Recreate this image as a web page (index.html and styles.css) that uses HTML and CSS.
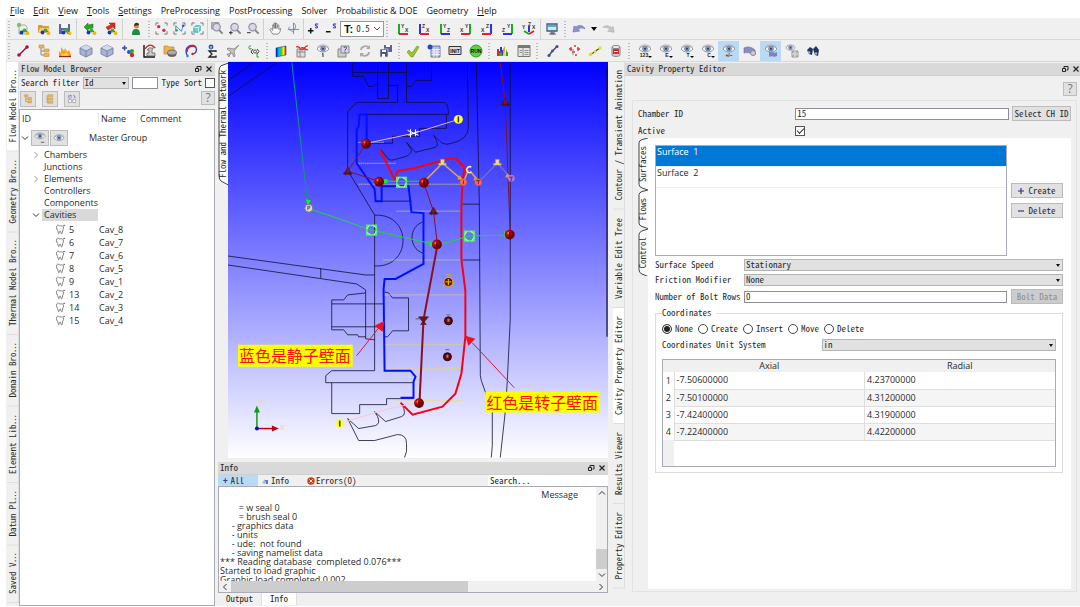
FILE: index.html
```html
<!DOCTYPE html>
<html lang="en">
<head>
<meta charset="utf-8">
<title>Flow Model Workbench</title>
<link rel="stylesheet" href="styles.css">
</head>
<body>
<svg class="defs" aria-hidden="true">
  <defs>
    <radialGradient id="ball-red" cx="35%" cy="35%"><stop offset="0" stop-color="#ff9a80"/><stop offset=".3" stop-color="#c81400"/><stop offset="1" stop-color="#6e0000"/></radialGradient>
    <linearGradient id="rainbow"><stop offset="0" stop-color="#0010e0"/><stop offset=".3" stop-color="#00c8f0"/><stop offset=".5" stop-color="#20d020"/><stop offset=".75" stop-color="#f8f000"/><stop offset="1" stop-color="#f00"/></linearGradient>
  </defs>
  <symbol id="balls" viewBox="0 0 14 14"><path d="M5 10l4-2 3 3" stroke="#333" fill="none"/><circle cx="5.500" cy="10.500" r="1.900" fill="#1738b8"/><circle cx="8.500" cy="8.500" r="1.900" fill="#29b42c"/><circle cx="11.500" cy="11.200" r="1.900" fill="#e8b81c"/></symbol>
  <symbol id="i-new" viewBox="0 0 14 14"><path d="M3 3h6l2 2v7H3z" fill="#eef2f4" stroke="#9aa"/><circle cx="3" cy="3" r="2.200" fill="#83bf72"/><use href="#balls"/></symbol>
  <symbol id="i-open" viewBox="0 0 14 14"><path d="M1 3h4l1 1h6v7H1z" fill="#d89b38"/><path d="M3 6h10l-2 5H1z" fill="#f5cb73"/><use href="#balls"/></symbol>
  <symbol id="i-save" viewBox="0 0 14 14"><path d="M1 2h11v10H1z" fill="#5b6a9e"/><path d="M3 2h7v4H3z" fill="#f4f6fa"/><path d="M4 8h5v4H4z" fill="#dde"/><use href="#balls"/></symbol>
  <symbol id="i-in" viewBox="0 0 14 14"><path d="M1 5l4-4v2l5-1v4l-5 1v2z" fill="#26a824" stroke="#157010" stroke-width=".5"/><use href="#balls"/></symbol>
  <symbol id="i-out" viewBox="0 0 14 14"><path d="M11 1v6L9 5 4 8 2 5l5-2-2-2z" fill="#e22a1e" stroke="#8c1410" stroke-width=".5"/><use href="#balls"/></symbol>
  <symbol id="i-user" viewBox="0 0 14 14"><path d="M3 13c0-4 1-6 4-6s4 2 4 6z" fill="#218a43"/><circle cx="7.500" cy="4" r="2.500" fill="#c98e5a"/><path d="M5 4c0-4 5-4 5-1z" fill="#4a2c14"/></symbol>
  <symbol id="brackets" viewBox="0 0 14 14"><path d="M1 4V1h3M10 1h3v3M13 10v3h-3M4 13H1v-3" stroke="#555" fill="none" stroke-width=".8"/></symbol>
  <symbol id="i-sel1" viewBox="0 0 14 14"><use href="#brackets"/><circle cx="4" cy="5" r="1.800" fill="#d8206c"/><circle cx="9.500" cy="9" r="1.800" fill="#d8206c"/></symbol>
  <symbol id="i-sel2" viewBox="0 0 14 14"><use href="#brackets"/><path d="M3 10V4l3 3 3 3 2-6" stroke="#2c8ac8" fill="none"/><circle cx="4" cy="9" r="1.300" fill="#2d9c2d"/><circle cx="11" cy="4" r="1.400" fill="#2850d8"/></symbol>
  <symbol id="i-sel3" viewBox="0 0 14 14"><use href="#brackets"/><path d="M3 6l2-2h5v5l-2 2H3z" fill="#70d0c8" stroke="#289088" stroke-width=".7"/><path d="M3 6h5v5M8 6l2-2" stroke="#fff" stroke-width=".7" fill="none"/></symbol>
  <symbol id="lens" viewBox="0 0 14 14"><path d="M8.500 8.500l4 4" stroke="#888" stroke-width="2.200"/><circle cx="6" cy="5.500" r="4" fill="#d6d9ee" stroke="#9494a4" stroke-width="1.300"/></symbol>
  <symbol id="i-zbox" viewBox="0 0 14 14"><path d="M.5.500h8v7h-8z" fill="#bbb" stroke="#999"/><use href="#lens"/></symbol>
  <symbol id="i-zin" viewBox="0 0 14 14"><use href="#lens"/><path d="M0 11.500h4M2 9.500v4" stroke="#222"/></symbol>
  <symbol id="i-zout" viewBox="0 0 14 14"><use href="#lens"/><path d="M0 11.500h4" stroke="#222"/></symbol>
  <symbol id="i-hand" viewBox="0 0 14 14"><path d="M4 13L1 8l1-1 2 2V3h1.500v4V1H7v6V1.500h1.500V7l1-4 1.200.5L10.500 8l2-1-.5 3-2 3z" fill="#fff" stroke="#666" stroke-width=".8"/></symbol>
  <symbol id="i-rot" viewBox="0 0 14 14"><path d="M7 1v12M1 8h12" stroke="#7384ae" fill="none"/><path d="M7 1c3 1 3 7-1 9M3 5c-2 2-1 4 3 5" stroke="#7384ae" fill="none"/></symbol>
  <symbol id="i-plus-s" viewBox="0 0 14 14"><path d="M1 9.500h6M4 6.500v6" stroke="#111" stroke-width="1.600"/><path d="M12 2.500c-3-1.500-4 1-2 1.700s2 3-1.500 1.800" stroke="#3a48b0" fill="none" stroke-width="1.200"/></symbol>
  <symbol id="i-minus-s" viewBox="0 0 14 14"><path d="M1 10.500h5" stroke="#111" stroke-width="1.600"/><path d="M12 2.500c-3-1.500-4 1-2 1.700s2 3-1.500 1.800" stroke="#3a48b0" fill="none" stroke-width="1.200"/></symbol>
  <symbol id="i-screen" viewBox="0 0 14 14"><path d="M2 2h10v7H2z" fill="#cfe8f8" stroke="#3c6078" stroke-width="1.300"/><path d="M3 3h8v2H3z" fill="#5aa6d8"/><path d="M6 9h3v3H6zM4 12h7" stroke="#667" fill="#889"/></symbol>
  <symbol id="i-undo" viewBox="0 0 14 14"><path d="M1 10l1-6 2 1c4-3 8-1 9 2-3-2-6-1-7 1l2 1z" fill="#8d93cf" stroke="#6a6fb0" stroke-width=".6"/></symbol>
  <symbol id="i-redo" viewBox="0 0 14 14"><path d="M13 11l-1-6-2 1C6 3 3 4 1 6c3-1 6 0 7 2l-2 2z" fill="#c8c8c8" stroke="#a5a5a5" stroke-width=".6"/></symbol>
  <symbol id="i-line" viewBox="0 0 14 14"><path d="M3 11l8-8" stroke="#8c1040" stroke-width="1.500"/><circle cx="3" cy="11" r="1.800" fill="#9c1846"/><circle cx="11" cy="3" r="1.800" fill="#9c1846"/></symbol>
  <symbol id="i-tree" viewBox="0 0 14 14"><path d="M4 3v8h4M4 7h4" stroke="#888" fill="none"/><path d="M2 1h5v3H2zM7 5h5v3H7zM7 9.500h5v3H7z" fill="#f0b452" stroke="#c49038" stroke-width=".6"/></symbol>
  <symbol id="i-fire" viewBox="0 0 14 14"><path d="M1 12V7l2 2V3l3 4 1-3 2 4 2-2 2 5v1z" fill="#f9a01b"/><path d="M3 12l1-3 2 2 2-3 2 3 1 1z" fill="#ffe040"/><path d="M1 12.500h12" stroke="#a02010" stroke-width="1.300"/></symbol>
  <symbol id="i-cube" viewBox="0 0 14 14"><path d="M7 1l6 3v6l-6 3-6-3V4z" fill="#a9b3d2" stroke="#6c7698" stroke-width=".8"/><path d="M1 4l6 3 6-3L7 1z" fill="#d2d9ec"/><path d="M1 4l6 3 6-3M7 7v6" stroke="#6c7698" fill="none" stroke-width=".8"/></symbol>
  <symbol id="i-addball" viewBox="0 0 14 14"><path d="M1 4h5M3.500 1.500v5" stroke="#3b47a5" stroke-width="1.400"/><circle cx="8" cy="8" r="2" fill="#2850d8"/><circle cx="11" cy="7" r="2" fill="#2a2"/><circle cx="11" cy="11" r="2.200" fill="#d3281e"/></symbol>
  <symbol id="i-curve" viewBox="0 0 14 14"><path d="M2 1v12h11" stroke="#111" fill="none" stroke-width="1.400"/><path d="M5 12V9h2V6H5l2-2h4l-1 2v3h3v3z" fill="#ccc" stroke="#555" stroke-width=".7"/><path d="M3 5c3-5 7-5 10-1" stroke="#e01818" fill="none" stroke-width="1.300"/></symbol>
  <symbol id="i-disk" viewBox="0 0 14 14"><path d="M1 2h4l1 1h5v7H1z" fill="#eeb450" stroke="#a87a2a" stroke-width=".6"/><ellipse cx="9" cy="10" rx="4.500" ry="3" fill="#666"/><ellipse cx="9" cy="8.500" rx="4.500" ry="2.500" fill="#aaa" stroke="#555" stroke-width=".7"/></symbol>
  <symbol id="i-loop" viewBox="0 0 14 14"><path d="M3 11C0 4 5 1 9 1.500s5 7 0 8.500" stroke="#3340d8" fill="none" stroke-width="1.400"/><path d="M3 8c0-5 5-7 8-5" stroke="#e01818" fill="none" stroke-width="1.300"/><circle cx="3.500" cy="12" r="1.300" fill="#28f"/><circle cx="8.500" cy="10" r="1.200" fill="#d22"/></symbol>
  <symbol id="i-sigma" viewBox="0 0 14 14"><path d="M11 8V7H4l3 3-3 3h7v-1.500" stroke="#222" fill="none" stroke-width="1.300"/><circle cx="6" cy="3" r="2.400" fill="#2a4cc0"/><path d="M6 2v2.500" stroke="#fff"/></symbol>
  <symbol id="i-plane" viewBox="0 0 14 14"><path d="M13 1L8 5 2 4 1 5l4 3-2 2-2 0 2 3 1-3 2-1 2 4 1-1-1-5z" fill="#c4c4c4" stroke="#777" stroke-width=".7"/></symbol>
  <symbol id="i-gl" viewBox="0 0 14 14"><path d="M4 2c-3-1-3 4 0 3V4M10 9v4h2" stroke="#2b9b3d" fill="none"/><path d="M6 5L4 8l2 2M10 5l2 2.500L10 10" stroke="#333" fill="none"/><circle cx="8" cy="7.500" r="1.500" fill="none" stroke="#555"/></symbol>
  <symbol id="i-contour" viewBox="0 0 14 14"><path d="M2 4l10-2v9l-10 2z" fill="url(#rainbow)" stroke="#226" stroke-width=".5"/></symbol>
  <symbol id="i-plot" viewBox="0 0 14 14"><path d="M2 5h8v8H2z" fill="#ddd" stroke="#888"/><path d="M2 8h8M5 5v8" stroke="#888"/><path d="M1 3c4-2 4 3 6 3s3-5 6-4M6 4c2-2 4 2 7 2" stroke="#d81e1e" fill="none" stroke-width="1.200"/></symbol>
  <symbol id="eye" viewBox="0 0 14 14"><path d="M1 5c3-4 9-4 12 0-3 4-9 4-12 0z" fill="#f4f4f4" stroke="#888" stroke-width=".8"/><path d="M1 3.500c3-3.500 9-3.500 12 0" stroke="#aaa" fill="none" stroke-width=".8"/><circle cx="7" cy="4.800" r="2.500" fill="#7f9fd2" stroke="#4d678f" stroke-width=".5"/><circle cx="7" cy="4.800" r="1" fill="#334"/></symbol>
  <symbol id="i-eye1" viewBox="0 0 14 14"><use href="#eye"/><path d="M7 13V9.500l-1 .7" stroke="#333" fill="none"/></symbol>
  <symbol id="i-qwin" viewBox="0 0 14 14"><path d="M1 5h8v8H1z" fill="#ccc" stroke="#888"/><path d="M4 2h8v7H4z" fill="#d7d7e0" stroke="#888"/><path d="M7 4c0-1.500 3-1.500 2.500.3L8 6v.6M8 7.500v1" stroke="#3340a0" fill="none"/></symbol>
  <symbol id="i-refresh" viewBox="0 0 14 14"><path d="M3 6c0-4 6-5 8-2M11 8c0 4-6 5-8 2" stroke="#aaa" stroke-width="1.800" fill="none"/><path d="M12 1v4H8zM2 13V9h4z" fill="#aaa"/></symbol>
  <symbol id="i-saves" viewBox="0 0 14 14"><path d="M5 1h8v7H5z" fill="#5b6490"/><path d="M7 1h4v2H7z" fill="#fff"/><path d="M1 5h8v8H1z" fill="#4a5488" stroke="#eee" stroke-width=".6"/><path d="M3 6h4v2H3zM3 10h3v3H3z" fill="#fff"/></symbol>
  <symbol id="i-check" viewBox="0 0 14 14"><path d="M1 8l2-2 3 3 5-7 2 1-6 10H5z" fill="#9bc42c" stroke="#6d9018" stroke-width=".6"/></symbol>
  <symbol id="i-calc" viewBox="0 0 14 14"><path d="M4 2h9v11H4z" fill="#b5bde0" stroke="#5561a0" stroke-width=".8"/><path d="M4.500 5.500h8.500M4.500 8h8.500M4.500 10.500h8.500M7 5v8M10 5v8" stroke="#fff" stroke-width=".8"/><circle cx="3" cy="3" r="2.500" fill="#2848b8"/></symbol>
  <symbol id="i-list" viewBox="0 0 14 14"><path d="M1 1.500h12v11H1z" fill="#e6e6e6" stroke="#777"/><path d="M1 3h12" stroke="#777" stroke-width="2"/><path d="M6 4v8M7.500 6.500h4M7.500 8.500h4M7.500 10.500h4M2.500 6.500h2.500M2.500 8.500h2.500" stroke="#888" stroke-width=".9"/></symbol>
  <symbol id="i-bars" viewBox="0 0 14 14"><path d="M1 12V5h2v2h1v5z" fill="#e22"/><path d="M4 12V3h2v3h1v6z" fill="#2a3ad8"/><path d="M3 12l2-5 2 5z" fill="#2cb52c"/><path d="M7 12V5l2-3v10z" fill="#f0a020"/><path d="M7 12l1.500-5 2 5z" fill="#f0e020"/><path d="M10 12V5l1 3h1v4z" fill="#28a828"/></symbol>
  <symbol id="i-nodes" viewBox="0 0 14 14"><path d="M3 11.500l3-4 5-5" stroke="#3a467c" stroke-width="1.400" fill="none"/><circle cx="3" cy="11.500" r="1.600" fill="#46538c"/><circle cx="11" cy="2.500" r="1.600" fill="#46538c"/><circle cx="6.500" cy="7" r="1.400" fill="#46538c"/></symbol>
  <symbol id="i-dots" viewBox="0 0 14 14"><path d="M2 5h3M7 2h2M10 5h3M5 8h3M8 11h2M4 3v4M11 3v4" stroke="#d23a2e" stroke-width="1.300"/><path d="M6 5v6" stroke="#888"/></symbol>
  <symbol id="i-ynodes" viewBox="0 0 14 14"><path d="M2 10l3-1 4-3 3-2" stroke="#444" stroke-width="1.200" fill="none"/><circle cx="2.500" cy="10.500" r="1.800" fill="#e6dc28"/><circle cx="7" cy="7.500" r="1.500" fill="#e6dc28"/><circle cx="12" cy="4" r="1.700" fill="#e6dc28"/></symbol>
  <symbol id="i-barrel" viewBox="0 0 14 14"><path d="M3 3v8c0 2 8 2 8 0V3" fill="#c8c8d0" stroke="#888"/><path d="M4 5h6v5H4z" fill="#e02828"/><path d="M5 7h4v1H5z" fill="#fff"/><ellipse cx="7" cy="3" rx="4" ry="1.600" fill="#eee" stroke="#888"/></symbol>
  <symbol id="i-surf" viewBox="0 0 14 14"><path d="M1 4c3-2 8-1 11 2v5C9 9 5 8 1 9z" fill="#8a8cc8" stroke="#6668a4" stroke-width=".6"/><circle cx="10" cy="9" r="2.500" fill="#ccd" stroke="#889"/></symbol>
  <symbol id="i-eyesurf" viewBox="0 0 14 14"><use href="#eye"/><path d="M5 8c3-1 5 2 8 0v4c-3 2-5-1-8 1z" fill="#8280c4"/></symbol>
  <symbol id="i-eyegrid" viewBox="0 0 14 14"><use href="#eye" width="11" height="11"/><path d="M7 7h6v6H7z" fill="#bbb" stroke="#999"/><path d="M7 10h6M10 7v6" stroke="#ddd"/></symbol>
  <symbol id="i-binoc" viewBox="0 0 14 14"><path d="M1 6l3-3 3 2-1 6-3-1zM7 5l3-3 3 4-1 6-3-1z" fill="#26355e"/><circle cx="3" cy="8.500" r="1.300" fill="#8fb3e8"/><circle cx="10" cy="9.500" r="1.300" fill="#8fb3e8"/></symbol>
  <symbol id="i-tooth" viewBox="0 0 12 12"><path d="M2 2c1-1.500 2-.5 3 0s3-1 4 1-1 4-1 6-1 2.500-1.500.5S5.500 7 5 8.500 4 12 3.500 9 .5 5 2 2z" fill="#fff" stroke="#666" stroke-width=".9"/><path d="M9 1.500h2" stroke="#555"/></symbol>
  <symbol id="i-restore" viewBox="0 0 8 8"><path d="M3 3V1.500h4V5H5.500" fill="none" stroke="#222"/><path d="M1.500 3.500h3v3h-3z" fill="none" stroke="#222"/></symbol>
  <symbol id="i-close" viewBox="0 0 8 8"><path d="M1.500 1.500l5 5M6.500 1.500l-5 5" stroke="#222" stroke-width="1.200"/></symbol>
  <symbol id="ball" viewBox="-5 -5 10 10"><circle r="4.500" fill="url(#ball-red)"/><path d="M0-2V2" stroke="#300" stroke-width="1"/></symbol>
  <symbol id="gate" viewBox="-5 -5 10 10"><path d="M-4-4h8v8h-8z" fill="none" stroke="#4cf05a" stroke-width="1.500"/><path d="M-2-4L-4-1M4 1L2 4M1-4L4-2M-4 2L-1 4" stroke="#a0ffa8"/></symbol>
  <symbol id="tri" viewBox="-5 -5 10 10"><path d="M0-4L4 3H-4z" fill="#7a1a1e" stroke="#4c1018" stroke-width=".6"/><path d="M-2 4V0M2 4V0M-5 2H5" stroke="#301018" stroke-width=".5"/></symbol>
</svg>

<div class="app">
  <nav class="menubar">
    <button class="menu"><u>F</u>ile</button><button class="menu"><u>E</u>dit</button><button class="menu"><u>V</u>iew</button><button class="menu"><u>T</u>ools</button><button class="menu"><u>S</u>ettings</button><button class="menu">PreProcessing</button><button class="menu">PostProcessing</button><button class="menu">Solver</button><button class="menu">Probabilistic &amp; DOE</button><button class="menu">Geometry</button><button class="menu"><u>H</u>elp</button>
  </nav>

  <div class="toolbars">
    <div class="toolbar">
      <i class="grip"></i>
      <button class="tool" aria-label="New"><svg><use href="#i-new"/></svg></button>
      <button class="tool" aria-label="Open"><svg><use href="#i-open"/></svg></button>
      <button class="tool" aria-label="Save"><svg><use href="#i-save"/></svg></button>
      <i class="rule"></i>
      <button class="tool" aria-label="Import"><svg><use href="#i-in"/></svg></button>
      <button class="tool" aria-label="Export"><svg><use href="#i-out"/></svg></button>
      <i class="rule"></i>
      <button class="tool" aria-label="User"><svg><use href="#i-user"/></svg></button>
      <i class="grip"></i>
      <button class="tool tight" aria-label="Select nodes"><svg><use href="#i-sel1"/></svg></button>
      <button class="tool tight" aria-label="Select network"><svg><use href="#i-sel2"/></svg></button>
      <button class="tool tight" aria-label="Select solid"><svg><use href="#i-sel3"/></svg></button>
      <i class="rule slim"></i>
      <button class="tool tight" aria-label="Zoom window"><svg><use href="#i-zbox"/></svg></button>
      <button class="tool tight" aria-label="Zoom in"><svg><use href="#i-zin"/></svg></button>
      <button class="tool tight" aria-label="Zoom out"><svg><use href="#i-zout"/></svg></button>
      <i class="rule"></i>
      <button class="tool tight" aria-label="Pan"><svg><use href="#i-hand"/></svg></button>
      <button class="tool tight" aria-label="Rotate"><svg><use href="#i-rot"/></svg></button>
      <i class="rule slim"></i>
      <button class="tool tight" aria-label="Larger symbols"><svg><use href="#i-plus-s"/></svg></button>
      <button class="tool tight" aria-label="Smaller symbols"><svg><use href="#i-minus-s"/></svg></button>
      <label class="scale"><b>T:</b><select class="bare" aria-label="Text scale"><option>0.5</option></select><svg class="chev" viewBox="0 0 6 6"><path d="M0 1l3 3 3-3" fill="none" stroke="#555"/></svg></label>
      <i class="grip wide"></i>
      <button class="tool" aria-label="View XY"><svg viewBox="0 0 14 14" class="axes"><path d="M3 2v10" stroke="#15b01a"/><path d="M3 12h9" stroke="#e02030"/><text x="5" y="6">Y</text><text x="9" y="10">X</text></svg></button>
      <button class="tool" aria-label="View XZ"><svg viewBox="0 0 14 14" class="axes"><path d="M3 2v10" stroke="#3030e0"/><path d="M3 12h9" stroke="#e02030"/><text x="5" y="6">Z</text><text x="9" y="10">X</text></svg></button>
      <button class="tool" aria-label="View ZY"><svg viewBox="0 0 14 14" class="axes"><path d="M3 2v10" stroke="#15b01a"/><path d="M3 12h9" stroke="#3030e0"/><text x="5" y="6">Y</text><text x="9" y="10">Z</text></svg></button>
      <button class="tool" aria-label="View -XY"><svg viewBox="0 0 14 14" class="axes"><path d="M11 2v10" stroke="#15b01a"/><path d="M2 12h9" stroke="#e02030"/><text x="6" y="6">Y</text><text x="1" y="10">X</text></svg></button>
      <button class="tool" aria-label="View -XZ"><svg viewBox="0 0 14 14" class="axes"><path d="M11 2v10" stroke="#3030e0"/><path d="M2 12h9" stroke="#e02030"/><text x="6" y="6">Z</text><text x="1" y="10">X</text></svg></button>
      <button class="tool" aria-label="View -ZY"><svg viewBox="0 0 14 14" class="axes"><path d="M11 2v10" stroke="#15b01a"/><path d="M2 12h9" stroke="#3030e0"/><text x="6" y="6">Y</text><text x="1" y="10">Z</text></svg></button>
      <button class="tool" aria-label="Isometric view"><svg viewBox="0 0 14 14" class="axes"><path d="M7 4v6" stroke="#3030e0"/><path d="M7 12l-5-3" stroke="#15b01a"/><path d="M7 12l5-3" stroke="#e02030"/><text x="6" y="4">Z</text><text x="0" y="7">Y</text><text x="10" y="7">X</text></svg></button>
      <i class="rule slim"></i>
      <button class="tool" aria-label="Display"><svg><use href="#i-screen"/></svg></button>
      <i class="grip"></i>
      <button class="tool" aria-label="Undo"><svg><use href="#i-undo"/></svg></button>
      <button class="tool thin" aria-label="Undo history"><svg class="drop" viewBox="0 0 6 4"><path d="M0 0h6L3 4z"/></svg></button>
      <button class="tool tight" aria-label="Redo"><svg><use href="#i-redo"/></svg></button>
    </div>
    <div class="toolbar">
      <i class="grip"></i>
      <button class="tool" aria-label="Line"><svg><use href="#i-line"/></svg></button>
      <button class="tool" aria-label="Tree"><svg><use href="#i-tree"/></svg></button>
      <button class="tool" aria-label="Thermal"><svg><use href="#i-fire"/></svg></button>
      <button class="tool" aria-label="Solid"><svg><use href="#i-cube"/></svg></button>
      <button class="tool" aria-label="Solid copy"><svg><use href="#i-cube"/></svg></button>
      <button class="tool" aria-label="Add chamber"><svg><use href="#i-addball"/></svg></button>
      <button class="tool" aria-label="Performance curve"><svg><use href="#i-curve"/></svg></button>
      <button class="tool" aria-label="Library"><svg><use href="#i-disk"/></svg></button>
      <button class="tool" aria-label="Loop"><svg><use href="#i-loop"/></svg></button>
      <button class="tool" aria-label="Sum"><svg><use href="#i-sigma"/></svg></button>
      <button class="tool" aria-label="Mission"><svg><use href="#i-plane"/></svg></button>
      <button class="tool" aria-label="Global to local"><svg><use href="#i-gl"/></svg></button>
      <i class="grip"></i>
      <button class="tool" aria-label="Contour"><svg><use href="#i-contour"/></svg></button>
      <button class="tool" aria-label="Plot"><svg><use href="#i-plot"/></svg></button>
      <button class="tool" aria-label="View 1"><svg><use href="#i-eye1"/></svg></button>
      <button class="tool" aria-label="Query"><svg><use href="#i-qwin"/></svg></button>
      <button class="tool" aria-label="Refresh"><svg><use href="#i-refresh"/></svg></button>
      <button class="tool" aria-label="Save all"><svg><use href="#i-saves"/></svg></button>
      <i class="grip"></i>
      <button class="tool" aria-label="Check model"><svg><use href="#i-check"/></svg></button>
      <button class="tool" aria-label="Calculate"><svg><use href="#i-calc"/></svg></button>
      <button class="tool" aria-label="Initialise"><svg viewBox="0 0 14 14" class="badge"><path d="M1 2.500h12v8H1z" fill="#ddd" stroke="#333"/><text x="7" y="9">INIT</text></svg></button>
      <button class="tool" aria-label="Run"><svg viewBox="0 0 14 14" class="badge"><circle cx="7" cy="7" r="6" fill="#5fd048" stroke="#3a9c28"/><text x="7" y="9">RUN</text></svg></button>
      <i class="grip"></i>
      <button class="tool" aria-label="Distribution"><svg><use href="#i-bars"/></svg></button>
      <button class="tool" aria-label="Report"><svg><use href="#i-list"/></svg></button>
      <i class="grip wide"></i>
      <button class="tool" aria-label="Polyline"><svg><use href="#i-nodes"/></svg></button>
      <button class="tool" aria-label="Points"><svg><use href="#i-dots"/></svg></button>
      <button class="tool" aria-label="Spline"><svg><use href="#i-ynodes"/></svg></button>
      <button class="tool" aria-label="Cylinder"><svg><use href="#i-barrel"/></svg></button>
      <i class="grip wide"></i>
      <button class="tool" aria-label="Show numbers"><svg viewBox="0 0 14 14" class="mark"><use href="#eye"/><text x="6" y="13">123</text><path d="M10 12h4l-2 2z"/></svg></button>
      <button class="tool" aria-label="Show elements"><svg viewBox="0 0 14 14" class="mark"><use href="#eye"/><text x="8" y="13">E</text><path d="M10 12h4l-2 2z"/></svg></button>
      <button class="tool" aria-label="Show thermal"><svg viewBox="0 0 14 14" class="mark"><use href="#eye"/><text x="8" y="13">T</text><path d="M10 12h4l-2 2z"/></svg></button>
      <button class="tool" aria-label="Show chambers"><svg viewBox="0 0 14 14" class="mark"><use href="#eye"/><text x="8" y="13">C</text><path d="M10 12h4l-2 2z"/></svg></button>
      <button class="tool on" aria-label="Show sign"><svg viewBox="0 0 14 14" class="mark"><use href="#eye"/><text x="7" y="13">+/−</text></svg></button>
      <button class="tool" aria-label="Surface"><svg><use href="#i-surf"/></svg></button>
      <button class="tool on" aria-label="Show surface"><svg><use href="#i-eyesurf"/></svg></button>
      <button class="tool" aria-label="Show grid"><svg><use href="#i-eyegrid"/></svg></button>
      <button class="tool" aria-label="Find"><svg><use href="#i-binoc"/></svg></button>
    </div>
  </div>

  <main class="work">
    <div class="vtabs">
      <button class="vtab active">Flow Model Bro⋯</button>
      <button class="vtab">Geometry Bro⋯</button>
      <button class="vtab">Thermal Model Bro⋯</button>
      <button class="vtab">Domain Bro⋯</button>
      <button class="vtab">Element Lib⋯</button>
      <button class="vtab">Datum Pl⋯</button>
      <button class="vtab">Saved V⋯</button>
    </div>

    <section class="browser">
      <header class="title"><span>Flow Model Browser</span><svg><use href="#i-restore"/></svg><svg><use href="#i-close"/></svg></header>
      <div class="filter">
        <label for="filter-by">Search filter</label>
        <span class="combo filter-combo"><select id="filter-by"><option>Id</option></select></span>
        <input class="field filter-text" type="text" aria-label="Filter text">
        <label class="sort" for="type-sort">Type Sort</label><input class="tick" id="type-sort" type="checkbox">
      </div>
      <div class="browser-tools">
        <button class="btn square" aria-label="Expand tree"><svg><use href="#i-tree"/></svg></button>
        <button class="btn square" aria-label="Collapse tree"><svg viewBox="0 0 14 14"><path d="M3 2v10h5M3 7h5" stroke="#888" fill="none"/><path d="M4 1h7v3H4zM4 5.500h7v3H4zM4 10h7v3H4z" fill="#f0b452" stroke="#c49038" stroke-width=".6"/></svg></button>
        <button class="btn square" aria-label="Sort tree"><svg viewBox="0 0 14 14"><path d="M2 2h4v4H2zM8 8h4v4H8zM2 8h4v4H2z" fill="#fff" stroke="#999"/><path d="M2.500 3.500l1 1 2-3M9 2c2 0 2 2 2 4" stroke="#3850c0" fill="none"/></svg></button>
        <button class="btn square help">?</button>
      </div>
      <div class="tree">
        <div class="tree-head"><span>ID</span><span>Name</span><span>Comment</span></div>
        <div class="master">
          <svg class="twist" viewBox="0 0 8 8"><path d="M1 2.500l3 3 3-3"/></svg>
          <button class="btn eyebtn" aria-label="Show group menu"><svg viewBox="0 0 14 14"><use href="#eye"/><path d="M8 12h4"  stroke="#555"/></svg></button>
          <button class="btn eyebtn" aria-label="Show group"><svg viewBox="0 0 14 14"><use href="#eye" y="2"/></svg></button>
          <span class="master-name">Master Group</span>
        </div>
        <ul class="groups">
          <li><svg class="twist soft" viewBox="0 0 8 8"><path d="M2.500 1l3 3-3 3"/></svg><span>Chambers</span></li>
          <li><i class="twist"></i><span>Junctions</span></li>
          <li><svg class="twist soft" viewBox="0 0 8 8"><path d="M2.500 1l3 3-3 3"/></svg><span>Elements</span></li>
          <li><i class="twist"></i><span>Controllers</span></li>
          <li><i class="twist"></i><span>Components</span></li>
          <li><svg class="twist" viewBox="0 0 8 8"><path d="M1 2.500l3 3 3-3"/></svg><span class="picked">Cavities</span></li>
        </ul>
        <ul class="cavities">
          <li><svg><use href="#i-tooth"/></svg><span>5</span><span>Cav_8</span></li>
          <li><svg><use href="#i-tooth"/></svg><span>6</span><span>Cav_7</span></li>
          <li><svg><use href="#i-tooth"/></svg><span>7</span><span>Cav_6</span></li>
          <li><svg><use href="#i-tooth"/></svg><span>8</span><span>Cav_5</span></li>
          <li><svg><use href="#i-tooth"/></svg><span>9</span><span>Cav_1</span></li>
          <li><svg><use href="#i-tooth"/></svg><span>13</span><span>Cav_2</span></li>
          <li><svg><use href="#i-tooth"/></svg><span>14</span><span>Cav_3</span></li>
          <li><svg><use href="#i-tooth"/></svg><span>15</span><span>Cav_4</span></li>
        </ul>
      </div>
    </section>

    <section class="center">
      <div class="viewport">
        <div class="slant-tabs"><button class="slant"><svg class="slant-line" viewBox="0 0 10 100" preserveAspectRatio="none"><path d="M10 1L3 3Q1 4 1 8V91Q1 95 3 96L10 99" /></svg><span>Flow and Thermal Network</span></button></div>
        <svg class="scene" viewBox="228 63 381 396" preserveAspectRatio="xMidYMid meet">
          <g class="ink">
            <path d="M228 81L254 63M228 97L277 63M353 63V77H364L369 87H374L378 83M353 73H407M378 63V99H389V63M389 86H398V103H357L348 112V171L375 216V372M407 63V103H445Q449 104 449 115M407 87H412L416 81H432V63"/>
            <path d="M359 115H449M447 115V129H420V137H393V144H367M381 150L389 160Q391 162 396 160L407 157Q414 153 411 149L407 143L416 153L436 148Q441 146 434 136L443 144Q447 146 452 144Q469 140 469 128L468 63"/>
            <path d="M477 63L480 205L481 377L482 382L493 413V447L492 459M463 205H480M463 261H481M511 63V320L508 383L506 413L501 459M375 202H412"/>
            <path d="M375 216C413 214 413 269 375 267M423 223C409 228 409 249 423 254M228 257L366 276H375M228 266L357 285L366 291V340L375 341M321 269V279"/>
            <path d="M366 294L348 296L344 301H332V331H344L348 336H358L359 338H366M332 305H384M332 328H384M385 293L389 294L393 299H409V332H393L388 338H385"/>
            <path d="M375 372H332L326 377V384H414M332 384V415H360V406H387V400H414"/>
            <path d="M348 420L359 430L376 427Q381 425 378 418L375 413L386 423L402 418Q408 416 402 405M348 420L359 442H375L398 436Q407 436 407 445V453L405 459"/>
            <path d="M608 68V338" stroke-width="1.500"/>
          </g>
          <path class="dots" d="M357 143H385M357 164H396M359 185H463M397 212H463M384 261H463M385 296H466M385 346H466M385 370H462M397 402H462"/>
          <path d="M367 144V115H360L359 127L357 130V164L375 190L376 202H382V187H409L412 213L424 214V265L396 280H385L384 290L385 372H411L416 378L414 383V399H401" fill="none" stroke="#0010ff" stroke-width="2"/>
          <path d="M380 150L396 182L397 174Q398 171 402 171L415 169L447 160Q456 157 460 163L465 168L463 185L462 207V260L466 292V338L462 375L456 395L443 408L413 416L401 404" fill="none" stroke="#fa0010" stroke-width="2"/>
          <g fill="none" stroke="#8a1020" stroke-width="1"><path d="M367 144L348 172L379 182M424 183L434 212L438 246M501 63L506 103L511 236"/><path d="M438 246L424 321L420 404" stroke-width="2"/></g>
          <path d="M308 209L372 231L434 245M438 246L470 237L507 236M383 182H424" stroke="#10e030" fill="none"/>
          <path d="M292 63L308 206" stroke="#109a70" fill="none"/>
          <path d="M306 200l2 7 3-6zM430 242l6 3-6 3zM505 233l6 3-6 3zM383 180h5v4h-5z" fill="#10f020"/>
          <path d="M367 144L414 134L456 121" stroke="#e0b0e8" fill="none"/><path d="M408 131l11 5M409 136l10-4M411 130v8M416 130v7" stroke="#fff" stroke-width="1"/>
          <path d="M346 423L386 411L418 404" stroke="#ffc6c6" fill="none"/>
          <path d="M424 183L443 164L462 180M464 183L469 171M471 172L479 182" stroke="#e8a840" stroke-width="1.500" fill="none"/><path d="M479 183L498 164L512 179" stroke="#a08890" fill="none"/>
          <path d="M460 176l4 5-6-1zM476 177l4 5-6-1zM508 174l4 5-6-1z" fill="#f0a020"/>
          <path d="M439 166h8v-2h-2v-4h-4v4h-2zM494 166h8v-2h-2v-4h-4v4h-2z" fill="#f5d490" stroke="#776" stroke-width=".5"/>
          <path d="M472 168a3 3 0 1 0 0 5" fill="none" stroke="#ffe8a8" stroke-width="1.500"/>
          <use href="#gate" x="396" y="177" width="12" height="12"/><use href="#gate" x="366" y="225" width="12" height="12"/><use href="#gate" x="464" y="231" width="12" height="12"/>
          <use href="#tri" x="343" y="167" width="10" height="10"/><use href="#tri" x="501" y="98" width="10" height="10"/><use href="#tri" x="429" y="207" width="10" height="10"/><path d="M419 318h10l-5 6zM416 320h4M421 326l3-4 3 4" fill="#6b1414" stroke="#501018" stroke-width=".6"/>
          <use href="#ball" x="361" y="139" width="11" height="11"/><use href="#ball" x="374" y="177" width="11" height="11"/><use href="#ball" x="419" y="178" width="11" height="11"/><use href="#ball" x="432" y="240" width="11" height="11"/><use href="#ball" x="505" y="230" width="11" height="11"/><use href="#ball" x="414" y="399" width="11" height="11"/>
          <circle cx="449" cy="283" r="4.500" fill="#402000" stroke="#f0a010" stroke-width="1.200"/><path d="M446 283h6M449 280v6M447 276h5" stroke="#f0a010" stroke-width="1.200"/>
          <g fill="#5a0c14" stroke="#300"><circle cx="449" cy="322" r="4"/><circle cx="448" cy="358" r="4"/></g><path d="M448 320h2v3h-2zM447 356h2v3h-2z" fill="#b08080"/><path d="M447 316h4M446 351h4" stroke="#666"/>
          <g fill="#ff6a50" stroke="#d04838" stroke-width=".5"><circle cx="464" cy="183" r="3.500"/><circle cx="479" cy="183" r="3.500"/></g><circle cx="512" cy="179" r="3.500" fill="#a878e8"/>
          <path d="M464 181v4M477 181.500h4M479 181v4M510 178h4M512 178v4" stroke="#702838" fill="none"/>
          <circle cx="459" cy="120" r="4.500" fill="#ffff30"/><path d="M459 117v6" stroke="#333" stroke-width="1.500"/><circle cx="340" cy="425" r="4.500" fill="#ffff30"/><path d="M340 422v6" stroke="#333" stroke-width="1.500"/>
          <circle cx="309" cy="209" r="4" fill="#ddd" stroke="#777"/><path d="M308 211v-4h2v2h-2" stroke="#444" fill="none" stroke-width=".8"/>
          <path d="M257 430V413" stroke="#08a010" stroke-width="1.500"/><path d="M254 414l3-7 3 7z" fill="#08a010"/><path d="M257 430H273" stroke="#c00010" stroke-width="1.500"/><path d="M272 427l7 3-7 3z" fill="#c00010"/><circle cx="257" cy="430" r="2" fill="#1010c0"/>
          <text class="axis-name" x="258" y="406">Y</text><text class="axis-name" x="280" y="431">X</text>
          <path d="M357 357L380 328M515 389L473 344" stroke="#f01020" fill="none"/><path d="M385 322l-2 11-8-6zM466 337l10 3-7 7z" fill="#f01020"/>
          <path d="M238 346h115v22H238zM486 393h115v21H486z" fill="#ff0"/>
          <text class="note" x="295" y="363">蓝色是静子壁面</text><text class="note" x="543" y="410">红色是转子壁面</text>
        </svg>
      </div>
      <section class="info">
        <header class="title"><span>Info</span><svg><use href="#i-restore"/></svg><svg><use href="#i-close"/></svg></header>
        <div class="info-bar">
          <button class="chip on"><b>+</b>All</button>
          <button class="chip"><svg viewBox="0 0 8 8"><path d="M1 6l3-4v5z" fill="#aab4dc"/><path d="M4 3h3v4H5z" fill="#5870e8"/></svg>Info</button>
          <button class="chip"><svg viewBox="0 0 8 8"><circle cx="4" cy="4" r="3.700" fill="#d03c18"/><path d="M2.500 2.500l3 3M5.500 2.500l-3 3" stroke="#fff"/></svg>Errors(0)</button>
          <input class="search" type="text" placeholder="Search..." aria-label="Search messages">
        </div>
        <div class="log">
          <div class="log-view">
            <div class="log-head">Message</div>
<pre class="log-text">        = w seal 0
        = brush seal 0
     - graphics data
     - units
     - ude:  not found
     - saving namelist data
*** Reading database  completed 0.076***
Started to load graphic
Graphic load completed 0.002</pre>
          </div>
          <div class="vbar"><svg viewBox="0 0 8 8"><path d="M1 5.500l3-3 3 3"/></svg><i class="vthumb"></i><svg viewBox="0 0 8 8"><path d="M1 2.500l3 3 3-3"/></svg></div>
          <div class="hbar"><svg viewBox="0 0 8 8"><path d="M5.500 1l-3 3 3 3"/></svg><i class="hthumb"></i><svg viewBox="0 0 8 8"><path d="M2.500 1l3 3-3 3"/></svg></div>
        </div>
        <div class="htabs"><button class="htab">Output</button><button class="htab active">Info</button></div>
      </section>
    </section>

    <div class="vtabs right">
      <button class="vtab">Contour / Transient Animation</button>
      <button class="vtab">Variable Edit Tree</button>
      <button class="vtab active">Cavity Property Editor</button>
      <button class="vtab">Results Viewer</button>
      <button class="vtab">Property Editor</button>
    </div>

    <section class="editor">
      <header class="title"><span>Cavity Property Editor</span><svg><use href="#i-restore"/></svg><svg><use href="#i-close"/></svg></header>
      <div class="help-row"><button class="btn square help">?</button></div>
      <div class="frame">
        <div class="head-form">
          <label for="chamber">Chamber ID</label><input class="field" id="chamber" type="text" value="15"><button class="btn">Select CH ID</button>
          <label for="active">Active</label><input class="tick" id="active" type="checkbox" checked>
        </div>
        <div class="pane-row">
          <div class="slant-tabs">
            <button class="slant"><svg class="slant-line" viewBox="0 0 10 100" preserveAspectRatio="none"><path d="M10 0L4 3Q1 5 1 9V89Q1 94 4 96L10 100"/></svg><span>Surfaces</span></button>
            <button class="slant"><svg class="slant-line" viewBox="0 0 10 100" preserveAspectRatio="none"><path d="M10 0L4 4Q1 7 1 12V86Q1 92 4 95L10 100"/></svg><span>Flows</span></button>
            <button class="slant"><svg class="slant-line" viewBox="0 0 10 100" preserveAspectRatio="none"><path d="M10 0L4 4Q1 7 1 12V86Q1 92 4 95L10 100"/></svg><span>Control</span></button>
          </div>
          <div class="pane">
            <div class="surfaces">
              <ul class="list"><li class="selected">Surface&nbsp; 1</li><li>Surface&nbsp; 2</li></ul>
              <div class="stack"><button class="btn"><svg viewBox="0 0 8 8"><path d="M0 4h8M4 0v8" stroke="#2c2c80" stroke-width="1.500"/></svg>Create</button><button class="btn"><svg viewBox="0 0 8 8"><path d="M0 4h8" stroke="#2c2c80" stroke-width="1.500"/></svg>Delete</button></div>
            </div>
            <div class="form">
              <label for="speed">Surface Speed</label><span class="combo span2"><select id="speed"><option>Stationary</option></select></span>
              <label for="friction">Friction Modifier</label><span class="combo span2"><select id="friction"><option>None</option></select></span>
              <label for="bolts">Number of Bolt Rows</label><input class="field" id="bolts" type="text" value="0"><button class="btn" disabled>Bolt Data</button>
            </div>
            <fieldset class="coords">
              <legend>Coordinates</legend>
              <div class="radios">
                <label><input class="radio" type="radio" name="mode" checked>None</label><label><input class="radio" type="radio" name="mode">Create</label><label><input class="radio" type="radio" name="mode">Insert</label><label><input class="radio" type="radio" name="mode">Move</label><label><input class="radio" type="radio" name="mode">Delete</label>
              </div>
              <div class="unit-row"><label for="unit">Coordinates Unit System</label><span class="combo"><select id="unit"><option>in</option></select></span></div>
              <div class="grid-box">
                <table class="grid">
                  <thead><tr><th class="num"></th><th>Axial</th><th>Radial</th></tr></thead>
                  <tbody>
                    <tr><th class="num">1</th><td>-7.50600000</td><td>4.23700000</td></tr>
                    <tr><th class="num">2</th><td>-7.50100000</td><td>4.31200000</td></tr>
                    <tr><th class="num">3</th><td>-7.42400000</td><td>4.31900000</td></tr>
                    <tr><th class="num">4</th><td>-7.22400000</td><td>4.42200000</td></tr>
                  </tbody>
                </table>
              </div>
            </fieldset>
          </div>
        </div>
      </div>
    </section>
  </main>
</div>
</body>
</html>
```
FILE: styles.css
```css
:root {
  --mono: "Noto Sans Mono CJK SC", "Liberation Mono", monospace;
  --ui: "Open Sans", "Noto Sans", sans-serif;
  --face: #f0f0f0;
  --bar: #d9d9d9;
  --line: #a8abb4;
}
* { box-sizing: border-box; }
body { margin: 0; background: #fff; color: #2a2a2a; font: 9px/12px var(--mono); }
button, input, select { font: inherit; color: inherit; margin: 0; padding: 0; border: 0; background: none; }
ul { list-style: none; margin: 0; padding: 0; }
.defs { position: absolute; width: 0; height: 0; }
.app { min-height: 100vh; display: flex; flex-direction: column; padding: 0 0 1px 6px; }

.menubar { display: flex; gap: 9px; height: 18px; padding: 4px 0 0 4px; color: #111; font-family: var(--ui); line-height: 14px; }
.menu { white-space: nowrap; }

.toolbars { background: var(--face); }
.toolbar { display: flex; align-items: center; height: 22px; border-bottom: 1px solid #d8d8d8; }
.tool { width: 21px; height: 20px; display: grid; place-items: center; }
.tool.tight { width: 18px; }
.tool.thin { width: 10px; }
.tool.on { background: #b9daf5; }
.tool svg { width: 14px; height: 14px; display: block; }
.tool.tight svg { width: 13px; height: 13px; }
.tool svg.drop { width: 6px; height: 4px; }
.axes { fill: none; stroke-width: 2; }
.axes text { fill: #333; font: bold 5px "Liberation Sans", sans-serif; }
.badge text { font: bold 5px "Liberation Sans", sans-serif; text-anchor: middle; fill: #111; }
.mark text { font: bold 5px "Liberation Sans", sans-serif; text-anchor: middle; fill: #222; }
.grip { flex: none; width: 6px; height: 16px; background: repeating-linear-gradient(#bbb 0 1px, transparent 1px 3px) 2px 0 / 2px 100% no-repeat; }
.grip.wide { width: 8px; }
.rule { flex: none; width: 4px; height: 20px; background: linear-gradient(#d0d0d0, #d0d0d0) 1px 0 / 1px 100% no-repeat; }
.rule.slim { width: 2px; }
.scale { display: flex; align-items: center; gap: 3px; width: 44px; height: 16px; padding: 0 3px; background: #fff; border: 1px solid #999; }
.scale b { font: bold 11px "Liberation Sans", sans-serif; color: #111; }
.bare { appearance: none; flex: 1; min-width: 0; }
.chev { flex: none; width: 6px; height: 6px; }

.work { flex: 1; display: grid; grid-template-columns: 13px 198px minmax(0, 391fr) 17px minmax(0, 455fr); background: var(--face); }

.title { display: flex; align-items: center; gap: 3px; height: 13px; padding: 0 2px; background: var(--bar); border-bottom: 1px solid #cfcfcf; }
.title span { flex: 1; }
.title svg { width: 8px; height: 8px; }

.vtabs { display: flex; flex-direction: column; padding-left: 1px; }
.vtab { writing-mode: vertical-rl; transform: rotate(180deg); width: 12px; padding: 8px 0; line-height: 12px; white-space: nowrap; text-align: left; border: 1px solid #dedede; border-width: 1px 0 0 1px; }
.vtab.active { background: #fff; }
.vtabs.right { padding-left: 5px; }

.field { min-width: 0; width: 100%; height: 12px; padding: 0 1px; background: #fff; border: 1px solid #8e8e96; line-height: 10px; }
.btn { display: flex; align-items: center; justify-content: center; gap: 4px; height: 15px; background: #e1e1e1; border: 1px solid #bcbcbc; white-space: nowrap; }
.btn:disabled { background: #ccc; color: #8e8e8e; }
.btn svg { width: 6px; height: 6px; }
.btn.square { width: 16px; height: 16px; }
.btn.square svg { width: 10px; height: 10px; }
.btn.help { width: 14px; height: 14px; font: 12px/12px var(--ui); color: #777; }
.combo { position: relative; display: block; min-width: 0; }
.combo select { display: block; appearance: none; width: 100%; height: 12px; padding: 0 1px; background: #e1e1e1; border: 1px solid #b4b4b4; line-height: 10px; }
.combo::after { content: ""; position: absolute; right: 3px; top: 5px; border: 2px solid transparent; border-top: 3px solid #111; border-bottom: 0; pointer-events: none; }
.tick { appearance: none; position: relative; width: 10px; height: 10px; background: #fff; border: 1px solid #555; }
.tick:checked::after { content: ""; position: absolute; left: 1px; top: 1px; width: 6px; height: 3px; border: 1px solid #333; border-width: 0 0 1px 1px; transform: rotate(-45deg); }

.browser { display: flex; flex-direction: column; padding: 1px 2px 0 0; }
.filter { display: flex; align-items: center; gap: 3px; height: 13px; padding-left: 2px; white-space: nowrap; }
.filter-combo { flex: none; width: 46px; }
.filter-text { flex: none; width: 26px; }
.sort { margin-left: auto; }
.browser-tools { display: flex; gap: 6px; padding: 2px 0 2px 1px; }
.browser-tools .help { margin-left: auto; }
.tree { flex: 1; background: #fff; border: 1px solid var(--line); font-family: var(--ui); }
.tree-head { display: grid; grid-template-columns: 79px 39px 1fr; height: 18px; align-items: center; }
.tree-head span { padding-left: 2px; border-right: 1px solid #e8e8e8; }
.tree-head span:last-child { border: 0; }
.master { display: flex; align-items: center; height: 19px; gap: 1px; padding-left: 1px; }
.twist { flex: none; width: 8px; height: 8px; fill: none; stroke: #333; stroke-width: 1; }
.twist.soft { stroke: #999; }
.eyebtn { width: 18px; height: 16px; }
.eyebtn svg { width: 12px; height: 12px; }
.eyebtn:first-of-type { margin-left: 1px; }
.master-name { margin-left: 20px; }
.groups { padding-top: 2px; }
.groups li { display: flex; align-items: center; height: 12px; padding-left: 12px; gap: 2px; }
.groups span { padding: 0 2px; }
.picked { width: 56px; background: var(--bar); }
.cavities { padding-top: 2px; }
.cavities li { display: grid; grid-template-columns: 14px 30px 1fr; align-items: center; height: 13px; padding-left: 35px; }
.cavities svg { width: 11px; height: 11px; }

.center { display: flex; flex-direction: column; min-width: 0; padding-left: 1px; }
.viewport { flex: 1; display: flex; min-height: 0; }
.slant-tabs { flex: none; width: 10px; }
.slant { position: relative; display: block; width: 10px; padding: 8px 0; }
.slant span { position: relative; display: block; writing-mode: vertical-rl; transform: rotate(180deg); line-height: 10px; white-space: nowrap; }
.slant-line { position: absolute; inset: 0; width: 100%; height: 100%; fill: #fafafa; stroke: #444; }
.slant-line path { vector-effect: non-scaling-stroke; }
.scene { flex: 1; min-width: 0; width: 0; height: 396px; background: linear-gradient(#00f, #fff); }
.ink { fill: none; stroke: #101030; stroke-width: 1; stroke-opacity: .8; }
.dots { fill: none; stroke: #e8e060; stroke-dasharray: 1 1; }
.axis-name { font: 7px "Liberation Sans", sans-serif; fill: #e8d890; }
.note { font: 16px "Noto Sans CJK SC", sans-serif; fill: #fa1010; text-anchor: middle; }

.info { padding: 3px 0 1px; }
.info-bar { display: flex; height: 11px; line-height: 11px; }
.chip { display: flex; align-items: center; gap: 3px; width: 40px; padding-left: 5px; }
.chip:nth-child(2) { padding-left: 3px; gap: 2px; }
.chip:nth-child(3) { margin-left: 4px; width: 90px; gap: 1px; }
.chip.on { background: #b9daf5; }
.chip b { color: #3a3a90; }
.chip svg { width: 8px; height: 8px; }
.search { margin-left: auto; width: 120px; padding-left: 2px; background: #fff; }
.search::placeholder { color: #222; opacity: 1; }
.log { display: grid; grid-template-columns: 1fr 11px; grid-template-rows: 94px 11px; border: 1px solid var(--line); background: #fff; }
.log-view { overflow: hidden; font-family: var(--ui); padding-left: 1px; }
.log-head { height: 16px; line-height: 16px; padding-right: 18px; text-align: right; }
.log-text { margin: 0; font: 9px/9px var(--ui); }
.vbar, .hbar { display: flex; align-items: center; background: var(--face); }
.vbar { flex-direction: column; }
.hbar { grid-column: 1 / -1; }
.vbar svg, .hbar svg { flex: none; width: 8px; height: 8px; margin: 2px; fill: none; stroke: #333; }
.vthumb { width: 11px; height: 20px; margin-top: auto; background: #cdcdcd; }
.hthumb { flex: 0 0 61%; height: 11px; margin-right: auto; background: #cdcdcd; }
.htabs { display: flex; }
.htab { height: 12px; padding: 0 8px; line-height: 12px; border-right: 1px solid #dedede; }
.htab.active { background: #fff; }

.editor { display: flex; flex-direction: column; min-width: 0; padding: 1px 0 14px; }
.editor .title { padding-right: 0; }
.help-row { display: flex; justify-content: flex-end; padding: 6px 3px 4px; }
.frame { flex: 1; display: flex; flex-direction: column; margin: 0 3px 0 7px; padding: 5px 5px 2px; border: 1px solid #e2e2e2; }
.head-form { display: grid; grid-template-columns: 155fr 215fr 59px; align-items: center; column-gap: 3px; row-gap: 3px; }
.head-form label { line-height: 14px; }
.pane-row { flex: 1; display: flex; }
.pane { flex: 1; min-width: 0; padding: 7px 8px 7px 7px; background: #fff; }
.surfaces { display: grid; grid-template-columns: 1fr 52px; gap: 4px; align-items: center; }
.list { height: 111px; border: 1px solid var(--line); font-family: var(--ui); }
.list li { height: 21px; padding: 0 1px; border-bottom: 1px solid #eee; }
.list .selected { background: #0078d7; color: #fff; }
.stack { display: grid; gap: 5px; }
.form { display: grid; grid-template-columns: 85px 1fr 52px; gap: 3px 4px; align-items: center; padding: 3px 0; white-space: nowrap; }
.span2 { grid-column: span 2; }
.coords { margin: 0; min-width: 0; padding: 0 6px 5px; border: 1px solid #dcdcdc; }
.coords legend { padding: 0 4px 0 0; line-height: 12px; }
.radios { display: flex; gap: 5px; padding: 4px 0; }
.radios label { display: flex; align-items: center; gap: 3px; }
.radio { appearance: none; width: 10px; height: 10px; border: 1px solid #444; border-radius: 50%; background: #fff; }
.radio:checked { background: #222; box-shadow: inset 0 0 0 1px #fff; }
.unit-row { display: grid; grid-template-columns: 160fr 235fr; align-items: center; margin-bottom: 8px; }
.grid-box { height: 108px; border: 1px solid var(--line); background: linear-gradient(90deg, #f0f0f0 11px, #fff 11px); }
.grid { width: 100%; border-collapse: collapse; table-layout: fixed; font: 9px/12px var(--ui); }
.grid th { padding: 0; font-weight: normal; background: var(--face); }
.grid .num { width: 11px; }
.grid tbody .num { background: #fff; text-align: center; }
.grid td { height: 17px; padding: 0 2px; border: 1px solid #dedede; border-width: 0 0 1px 1px; }
.grid tr:nth-child(even) td { background: #f5f5f5; }
```
